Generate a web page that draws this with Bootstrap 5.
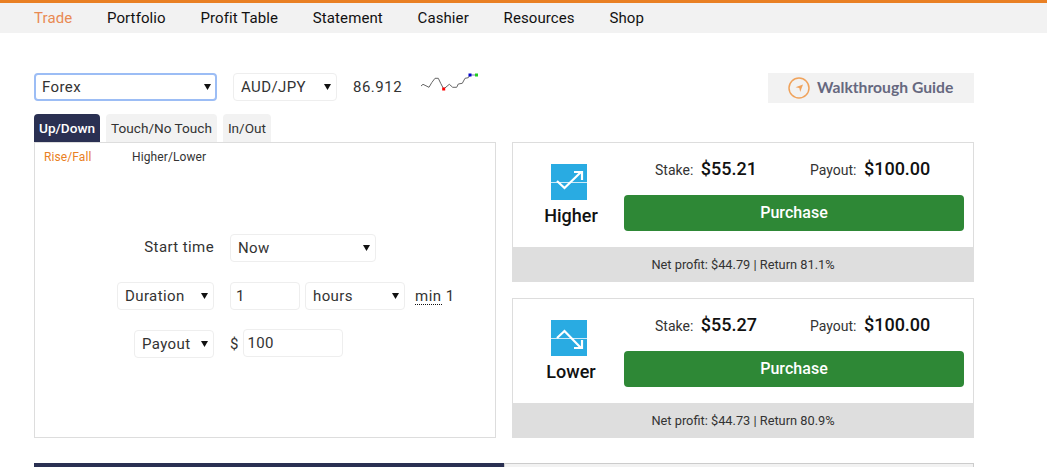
<!DOCTYPE html>
<html lang="en">
<head>
<meta charset="utf-8">
<title>Trade</title>
<link href="https://cdn.jsdelivr.net/npm/bootstrap@5.3.0/dist/css/bootstrap.min.css" rel="stylesheet">
<style>
html,body{height:467px;overflow:hidden}
body{font-family:Roboto,"Liberation Sans",sans-serif;color:#333;background:#fff;font-size:15px}
.topnav{border-top:3px solid #e98024;background:#f2f2f2;height:33px;padding-left:34px;gap:34.7px;align-items:center}
.topnav a{color:#111;text-decoration:none;font-size:15px;line-height:30px;letter-spacing:.1px}
.topnav a.on{color:#e98a52}
.shell{margin:40px 73px 0 34px;width:940px}
.toolbar{height:30px}
.sel{appearance:none;height:28px;border:1px solid #eee;border-radius:4px;background:#fff url("data:image/svg+xml,%3Csvg xmlns='http://www.w3.org/2000/svg' width='7' height='6'%3E%3Cpath d='M0 0h7L3.500 6z' fill='%23111'/%3E%3C/svg%3E") no-repeat right 5px center;font:15px Roboto,sans-serif;color:#333;padding:0 18px 0 7px;letter-spacing:.4px;outline:0}
.sel.focused{border:2px solid #9cbdf5;padding-left:6px;background-position:right 4px center}
.w183{width:183px}.w104{width:104px}.w146{width:146px}.w97{width:97px}.w80{width:80px}.w100{width:100px}.w70{width:70px}
.price{font-size:15px;letter-spacing:.5px;margin:0 17px 0 16px;width:50px;height:28px}
.guide{width:206px;height:30px;background:#f2f2f2;color:#66687f;font-size:15.7px;font-weight:700;font-family:Lato,Roboto,sans-serif;gap:7px;padding-left:20px}
.tabrow{gap:6px;margin-top:11px;height:28px}
.tabitem{background:#f2f2f2;color:#333;font-size:13.6px;padding:0 5px;line-height:29px;border-radius:4px 4px 0 0}
.tabitem.on{background:#2a3052;color:#fff;font-weight:500}
.tradecols{gap:16px;height:296px}
.leftpane{width:462px;border:1px solid #ddd;height:296px}
.subtabs{padding:7px 0 0 9px;font-size:12px;gap:40.5px;line-height:14px;color:#333;letter-spacing:.1px}
.subtabs .on{color:#e98024}
.formzone{margin-top:70px;row-gap:20px}
.frow{height:28px;gap:16px}
.flabel{width:179px;flex:none;justify-content:flex-end}
.flabel.txt{padding-bottom:1px;letter-spacing:.4px}
.inp{height:28px;border:1px solid #eee;border-radius:4px;font:15px Roboto,sans-serif;color:#333;padding:0 5px;letter-spacing:.4px;outline:0;background:#fff}
.inp.tight{padding:0 3px;margin-top:-2px}
.gap5{gap:5px}
.minnote{margin-left:5px;letter-spacing:.5px}
.dotted{border-bottom:1px dotted #111;line-height:15px;display:inline-block}
.rightpane{width:462px;gap:16px}
.offer{height:140px;border:1px solid #ddd;border-bottom:0}
.offertop{height:104px}
.offerside{width:116px;padding-top:21px}
.offerside svg{margin-right:4px}
.offername{font-size:18px;font-weight:500;color:#111;line-height:22px;margin-top:5px}
.offermain{width:340px;margin-left:-5px;padding-top:14px}
.stakes{height:38px;font-size:14px;line-height:24px}
.stakes b{font-size:18px;font-weight:500;color:#111;margin-left:4px}
.stake1{margin-left:31px;width:155px}
.buybtn{background:#2e8836;border:0;border-radius:4px;width:340px;height:36px;color:#fff;font-size:16px;font-weight:500;padding:0;letter-spacing:.05px}
.buybtn:hover{background:#2e8836;color:#fff}
.offerfoot{background:#dedede;height:35px;margin:0 -1px;font-size:12.8px;color:#333;line-height:35px;text-align:center}
.lowbar{margin-top:25px;height:4px}
.lowbar .lowa{width:470px;background:#2a3052}
.lowbar .lowb{width:470px;background:#f2f2f2;border:1px solid #ccc;border-bottom:0}
</style>
</head>
<body>
<nav class="topnav d-flex">
<a class="on" href="#">Trade</a><a href="#">Portfolio</a><a href="#">Profit Table</a><a href="#">Statement</a><a href="#">Cashier</a><a href="#">Resources</a><a href="#">Shop</a>
</nav>
<main class="shell">
<div class="toolbar d-flex align-items-start">
<select class="sel focused w183" aria-label="Market"><option>Forex</option></select>
<select class="sel w104 ms-3" aria-label="Symbol"><option>AUD/JPY</option></select>
<span class="price d-flex align-items-center">86.912</span>
<svg width="60" height="20" viewBox="0 0 60 20" aria-hidden="true"><path d="M1 13L3 11.300L9 14.300L11.700 9.700L15 5.300H18.300L20.700 10.300L23.700 16L29.300 11.300L32.700 14.300H36.700L38.300 11L42.300 10.300L45 5.300L48.300 4.700L50 2" fill="none" stroke="#666" stroke-width="1"/><path d="M50 2H56" stroke="#55a" stroke-width=".8"/><rect x="22.200" y="14.500" width="3" height="3" fill="#f00"/><rect x="48.500" y="0.500" width="3" height="3" fill="#00c"/><rect x="55" y="0.500" width="3" height="3" fill="#2c2"/></svg>
<a class="guide d-flex align-items-center ms-auto text-decoration-none" href="#">
<svg width="22" height="22" viewBox="0 0 22 22" aria-hidden="true"><circle cx="11" cy="11" r="10" fill="none" stroke="#f0a35c" stroke-width="1.500"/><path d="M7.500 10.300L15 7.500L12.200 15L11.300 11z" fill="#f0a35c"/></svg>
Walkthrough Guide</a>
</div>
<div class="tabrow d-flex">
<div class="tabitem on">Up/Down</div><div class="tabitem">Touch/No Touch</div><div class="tabitem">In/Out</div>
</div>
<div class="tradecols d-flex">
<section class="leftpane">
<div class="subtabs d-flex"><span class="on">Rise/Fall</span><span>Higher/Lower</span></div>
<div class="formzone d-flex flex-column">
<div class="frow d-flex align-items-center"><div class="flabel txt d-flex">Start time</div><select class="sel w146" aria-label="Start time"><option>Now</option></select></div>
<div class="frow d-flex align-items-center"><div class="flabel d-flex"><select class="sel w97" aria-label="Duration type"><option>Duration</option></select></div>
<div class="d-flex align-items-center gap5"><input class="inp w70" value="1" aria-label="Duration"><select class="sel w100" aria-label="Unit"><option>hours</option></select><span class="minnote"><span class="dotted">min</span> 1</span></div></div>
<div class="frow d-flex align-items-center"><div class="flabel d-flex"><select class="sel w80" aria-label="Amount type"><option>Payout</option></select></div>
<div class="d-flex align-items-center gap5"><span>$</span><input class="inp tight w100" value="100" aria-label="Amount"></div></div>
</div>
</section>
<section class="rightpane d-flex flex-column">
<article class="offer">
<div class="offertop d-flex">
<div class="offerside d-flex flex-column align-items-center">
<svg width="36" height="36" viewBox="0 0 36 36" aria-hidden="true"><rect width="36" height="36" fill="#29abe2"/><path d="M0 18.500H36" stroke="#cdeaf8" stroke-width="1.200"/><path d="M6 17L13.500 24L30 8M23 8H31V16" fill="none" stroke="#fff" stroke-width="2.200"/></svg>
<div class="offername">Higher</div>
</div>
<div class="offermain">
<div class="stakes d-flex align-items-start"><span class="stake1">Stake: <b>$55.21</b></span><span>Payout: <b>$100.00</b></span></div>
<button class="btn buybtn" type="button">Purchase</button>
</div>
</div>
<div class="offerfoot">Net profit: $44.79 | Return 81.1%</div>
</article>
<article class="offer">
<div class="offertop d-flex">
<div class="offerside d-flex flex-column align-items-center">
<svg width="36" height="36" viewBox="0 0 36 36" aria-hidden="true"><rect width="36" height="36" fill="#29abe2"/><path d="M0 18.500H36" stroke="#cdeaf8" stroke-width="1.200"/><path d="M6 18L13.500 11L30 28M23 28H31V20" fill="none" stroke="#fff" stroke-width="2.200"/></svg>
<div class="offername">Lower</div>
</div>
<div class="offermain">
<div class="stakes d-flex align-items-start"><span class="stake1">Stake: <b>$55.27</b></span><span>Payout: <b>$100.00</b></span></div>
<button class="btn buybtn" type="button">Purchase</button>
</div>
</div>
<div class="offerfoot">Net profit: $44.73 | Return 80.9%</div>
</article>
</section>
</div>
<div class="lowbar d-flex"><div class="lowa"></div><div class="lowb"></div></div>
</main>
<script src="https://cdn.jsdelivr.net/npm/bootstrap@5.3.0/dist/js/bootstrap.bundle.min.js"></script>
</body>
</html>
